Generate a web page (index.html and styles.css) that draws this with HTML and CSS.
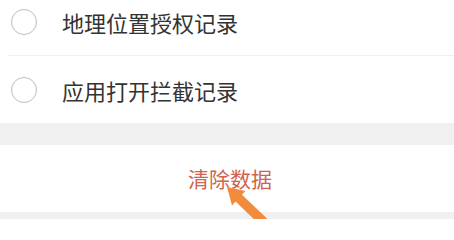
FILE: index.html
```html
<!DOCTYPE html>
<html lang="zh-CN">
<head>
<meta charset="utf-8">
<link rel="stylesheet" href="styles.css">
</head>
<body>
<div class="page">
  <div class="list">
    <div class="row">
      <span class="radio"></span>
      <span class="label">地理位置授权记录</span>
    </div>
    <div class="row">
      <span class="radio"></span>
      <span class="label">应用打开拦截记录</span>
    </div>
  </div>
  <div class="gap"></div>
  <div class="action">
    <span class="clear">清除数据</span>
  </div>
  <div class="gap"></div>
  <svg class="arrow" width="454" height="219" viewBox="0 0 454 219">
    <polygon fill="#f28c3c" points="227,187 245.5,191 242,194.8 267,218.5 260.5,225.5 235.5,201.5 232,205.5"/>
  </svg>
</div>
</body>
</html>
```
FILE: styles.css
```css
html, body {
  margin: 0;
  padding: 0;
  background: #ffffff;
}
.page {
  position: relative;
  width: 454px;
  height: 219px;
  overflow: hidden;
  font-family: "Noto Sans CJK SC", "Noto Sans", sans-serif;
}
.list {
  margin-top: -11px;
  background: #ffffff;
}
.row {
  display: flex;
  align-items: center;
  height: 66px;
  padding-left: 11px;
}
.row + .row {
  height: 67px;
  border-top: 1px solid #efefef;
  margin-left: 8px;
  padding-left: 3px;
}
.radio {
  box-sizing: border-box;
  width: 26px;
  height: 26px;
  border: 1.5px solid #bdbdbd;
  border-radius: 50%;
  flex: none;
}
.label {
  margin-left: 25px;
  font-size: 22px;
  color: #333333;
  line-height: 1;
}
.gap {
  height: 22px;
  background: #f0f0f0;
}
.action {
  height: 67px;
  display: flex;
  align-items: center;
  justify-content: center;
  background: #ffffff;
}
.clear {
  font-size: 21px;
  color: #cf644e;
  line-height: 1;
  padding-left: 6px;
}
.arrow {
  position: absolute;
  left: 0;
  top: 0;
}
```
